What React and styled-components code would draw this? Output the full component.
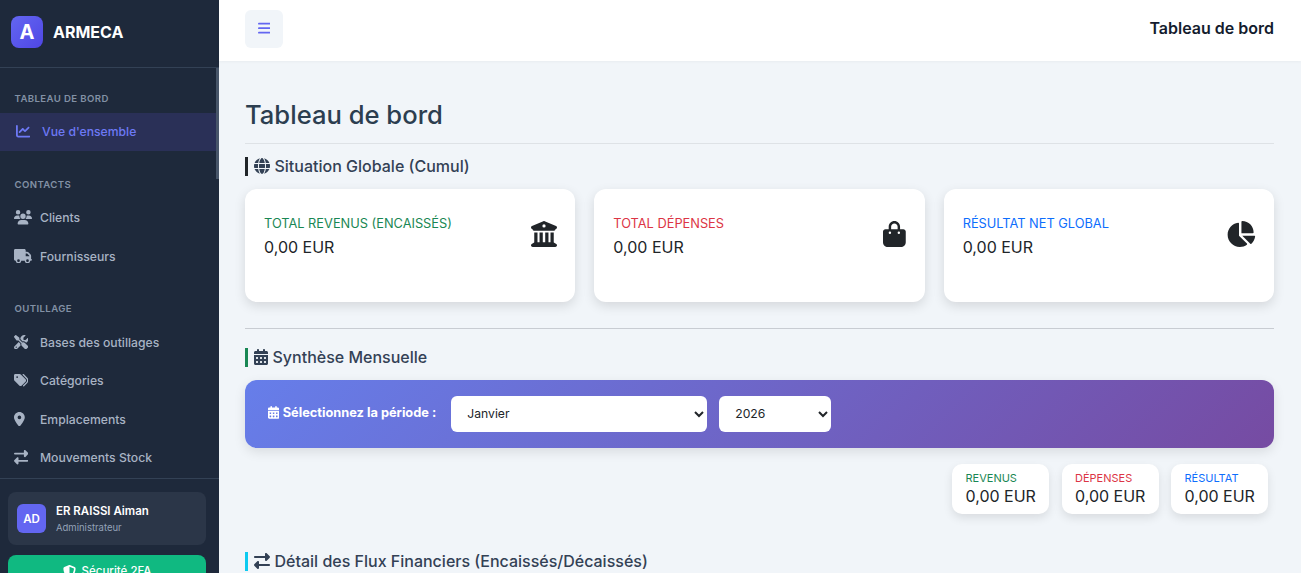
import styled, { createGlobalStyle } from "styled-components";
import {
  FaBagShopping,
  FaBars,
  FaBuildingColumns,
  FaCalendarDays,
  FaChartLine,
  FaChartPie,
  FaGlobe,
  FaLocationDot,
  FaRightLeft,
  FaScrewdriverWrench,
  FaShieldHalved,
  FaTags,
  FaTruck,
  FaUsers,
} from "react-icons/fa6";

const GlobalStyle = createGlobalStyle`
  * { box-sizing: border-box; }
  html, body { margin: 0; height: 100%; overflow: hidden; }
  body {
    font-family: Inter, "Liberation Sans", sans-serif;
    background: #f1f5f9;
    color: #212529;
  }
`;

const Layout = styled.div`
  display: flex;
  height: 573px;
  overflow: hidden;
`;

const Sidebar = styled.aside`
  width: 219px;
  flex-shrink: 0;
  height: 573px;
  display: flex;
  flex-direction: column;
  background: #1e293b;
`;

const Brand = styled.div`
  height: 68px;
  flex-shrink: 0;
  display: flex;
  align-items: center;
  gap: 10px;
  padding: 0 11px 4px;
  border-bottom: 1px solid #334155;
`;

const BrandLogo = styled.div`
  width: 32px;
  height: 32px;
  border-radius: 8px;
  display: flex;
  align-items: center;
  justify-content: center;
  background: linear-gradient(135deg, #6366f1, #4f46e5);
  color: #fff;
  font-size: 20px;
  font-weight: 700;
`;

const BrandName = styled.span`
  color: #fff;
  font-size: 16px;
  font-weight: 700;
`;

const Nav = styled.nav`
  position: relative;
  height: 411px;
  flex-shrink: 0;
  overflow: hidden;
  border-bottom: 1px solid #334155;
  padding-top: 24px;
`;

const NavThumb = styled.div`
  position: absolute;
  top: 0;
  right: 0;
  width: 3px;
  height: 111px;
  background: #475569;
`;

const NavGroup = styled.div`
  & + & {
    margin-top: 26.5px;
  }
`;

const NavTitle = styled.div`
  padding: 0 14.5px;
  margin-bottom: 8px;
  line-height: 13px;
  color: #94a3b8;
  opacity: 0.85;
  font-size: 9.6px;
  font-weight: 600;
  letter-spacing: 0.4px;
  text-transform: uppercase;
`;

const NavItem = styled.a`
  display: flex;
  align-items: center;
  height: ${(p) => (p.$active ? "38px" : "38.5px")};
  padding: 0 0 ${(p) => (p.$active ? "1.5px" : "0.5px")} ${(p) => (p.$active ? "16px" : "14px")};
  font-size: 12.2px;
  font-weight: 500;
  color: ${(p) => (p.$active ? "#6d79f5" : "#a8b3c4")};
  background: ${(p) => (p.$active ? "#2a3057" : "transparent")};
`;

// $box is the width of the icon's viewBox, the height of all of them being 512
const NavIcon = styled.span`
  width: 26px;
  flex-shrink: 0;
  display: flex;
  align-items: center;
  svg {
    height: 14.4px;
    width: ${(p) => (p.$box / 512) * 14.4}px;
  }
`;

const SidebarFooter = styled.div`
  padding: 13px 13px 0 8px;
  display: flex;
  flex-direction: column;
  gap: 10px;
`;

const UserCard = styled.div`
  height: 53px;
  display: flex;
  align-items: center;
  gap: 10px;
  padding: 0 9px;
  border-radius: 8px;
  background: #2b3648;
`;

const Avatar = styled.div`
  width: 29px;
  height: 29px;
  border-radius: 6px;
  display: flex;
  align-items: center;
  justify-content: center;
  background: #6366f1;
  color: #fff;
  font-size: 11.5px;
  font-weight: 600;
`;

const UserInfo = styled.div`
  padding-top: 2px;
`;

const UserName = styled.div`
  color: #fff;
  font-size: 11.5px;
  font-weight: 600;
  line-height: 15px;
`;

const UserRole = styled.div`
  color: #94a3b8;
  font-size: 9.5px;
  line-height: 17px;
`;

const TwoFactor = styled.button`
  height: 38px;
  border: 0;
  border-radius: 8px;
  background: #10b981;
  color: #fff;
  font-family: inherit;
  font-size: 11.5px;
  font-weight: 500;
  display: flex;
  justify-content: center;
  align-items: center;
  gap: 6px;
  padding: 0 0 6px;
  svg {
    width: 13px;
    height: 13px;
  }
`;

const Main = styled.main`
  flex: 1;
  min-width: 0;
  display: flex;
  flex-direction: column;
  background: #f1f5f9;
`;

const Header = styled.header`
  height: 61px;
  flex-shrink: 0;
  display: flex;
  align-items: center;
  justify-content: space-between;
  padding: 0 27px 4px 26px;
  background: #fff;
  box-shadow: 0 1px 3px rgba(0, 0, 0, 0.04);
`;

const MenuButton = styled.button`
  width: 38px;
  height: 38px;
  border: 0;
  border-radius: 6px;
  background: #f1f5f9;
  color: #6366f1;
  display: flex;
  align-items: center;
  justify-content: center;
  svg {
    height: 14.4px;
    width: 12.6px;
  }
`;

const HeaderTitle = styled.div`
  margin-bottom: 2px;
  color: #141c2e;
  font-size: 16px;
  font-weight: 600;
`;

const Content = styled.div`
  padding: 35px 27px 0 26px;
`;

const PageTitle = styled.h1`
  margin: 0;
  padding-bottom: 10px;
  border-bottom: 1px solid #dee2e6;
  color: #2c3e50;
  font-size: 25.6px;
  font-weight: 500;
  line-height: 37px;
`;

const SectionTitle = styled.h2`
  margin: ${(p) => p.$mt} 0 0;
  height: 19px;
  display: flex;
  align-items: center;
  gap: 4.5px;
  padding: 0 0 1px 6px;
  border-left: 3px solid ${(p) => p.$accent};
  color: #334155;
  font-size: 16px;
  font-weight: 500;
  white-space: nowrap;
  svg {
    height: 16px;
    width: ${(p) => p.$iconWidth || 16}px;
    flex-shrink: 0;
  }
`;

const StatGrid = styled.div`
  display: grid;
  grid-template-columns: repeat(3, 1fr);
  gap: 19px;
  margin-top: 13px;
`;

const StatCard = styled.div`
  height: 113px;
  display: flex;
  justify-content: space-between;
  padding: 26px 18.5px 0 19px;
  border-radius: 12px;
  background: #fff;
  box-shadow: 0 4px 12px rgba(0, 0, 0, 0.12);
`;

const StatLabel = styled.div`
  color: ${(p) => p.$color};
  font-size: 12.8px;
  line-height: 17px;
  text-transform: uppercase;
`;

const StatValue = styled.div`
  margin-top: 6px;
  color: #212529;
  font-size: 16px;
  line-height: 18px;
`;

const StatIcon = styled.div`
  padding-top: 6px;
  line-height: 0;
  color: #212529;
  svg {
    height: 26px;
    width: ${(p) => (p.$box / 512) * 26}px;
  }
`;

const Divider = styled.hr`
  margin: 26px 0 0;
  border: 0;
  border-top: 1px solid #c8ccd2;
`;

const PeriodBar = styled.div`
  height: 68px;
  margin-top: 13px;
  display: flex;
  align-items: center;
  padding: 0 23px;
  border-radius: 12px;
  background: linear-gradient(135deg, #667eea 0%, #764ba2 100%);
  box-shadow: 0 4px 12px rgba(0, 0, 0, 0.1);
`;

const PeriodLabel = styled.label`
  display: flex;
  align-items: center;
  gap: 3.5px;
  margin: 0 15px 3px 0;
  color: #fff;
  font-size: 12.8px;
  font-weight: 700;
  svg {
    height: 12.8px;
    width: 11.2px;
  }
`;

const PeriodSelect = styled.select`
  width: ${(p) => p.$width};
  height: 36px;
  margin-right: 12px;
  padding: 0 12px 2px;
  border: 0;
  border-radius: 6px;
  background: #fff;
  color: #212529;
  font-family: inherit;
  font-size: 12.2px;
`;

const Totals = styled.div`
  display: flex;
  justify-content: flex-end;
  gap: 12.5px;
  margin-top: 16px;
  padding-right: 6px;
`;

const TotalCard = styled.div`
  width: 97px;
  height: 50px;
  padding: 7px 0 0 13.5px;
  border-radius: 10px;
  background: #fff;
  box-shadow: 0 4px 10px rgba(0, 0, 0, 0.1);
`;

const TotalLabel = styled.div`
  color: ${(p) => p.$color};
  font-size: 11px;
  line-height: 14px;
  text-transform: uppercase;
`;

const TotalValue = styled.div`
  margin-top: 2px;
  color: #212529;
  font-size: 16px;
  line-height: 19px;
`;

const navGroups = [
  { title: "Tableau de bord", items: [{ label: "Vue d'ensemble", icon: FaChartLine, box: 512, active: true }] },
  {
    title: "Contacts",
    items: [
      { label: "Clients", icon: FaUsers, box: 640 },
      { label: "Fournisseurs", icon: FaTruck, box: 640 },
    ],
  },
  {
    title: "Outillage",
    items: [
      { label: "Bases des outillages", icon: FaScrewdriverWrench, box: 512 },
      { label: "Catégories", icon: FaTags, box: 512 },
      { label: "Emplacements", icon: FaLocationDot, box: 384 },
      { label: "Mouvements Stock", icon: FaRightLeft, box: 512 },
    ],
  },
];

const stats = [
  { label: "Total revenus (encaissés)", color: "#198754", icon: FaBuildingColumns, box: 512 },
  { label: "Total dépenses", color: "#dc3545", icon: FaBagShopping, box: 448 },
  { label: "Résultat net global", color: "#0d6efd", icon: FaChartPie, box: 576 },
];

const totals = [
  { label: "Revenus", color: "#198754" },
  { label: "Dépenses", color: "#dc3545" },
  { label: "Résultat", color: "#0d6efd" },
];

const App = () => {
  return (
    <Layout>
      <GlobalStyle />
      <Sidebar>
        <Brand>
          <BrandLogo>A</BrandLogo>
          <BrandName>ARMECA</BrandName>
        </Brand>
        <Nav>
          <NavThumb />
          {navGroups.map((group) => (
            <NavGroup key={group.title}>
              <NavTitle>{group.title}</NavTitle>
              {group.items.map(({ label, icon: Icon, box, active }) => (
                <NavItem key={label} $active={active}>
                  <NavIcon $box={box}>
                    <Icon />
                  </NavIcon>
                  {label}
                </NavItem>
              ))}
            </NavGroup>
          ))}
        </Nav>
        <SidebarFooter>
          <UserCard>
            <Avatar>AD</Avatar>
            <UserInfo>
              <UserName>ER RAISSI Aiman</UserName>
              <UserRole>Administrateur</UserRole>
            </UserInfo>
          </UserCard>
          <TwoFactor>
            <FaShieldHalved />
            Sécurité 2FA
          </TwoFactor>
        </SidebarFooter>
      </Sidebar>
      <Main>
        <Header>
          <MenuButton>
            <FaBars />
          </MenuButton>
          <HeaderTitle>Tableau de bord</HeaderTitle>
        </Header>
        <Content>
          <PageTitle>Tableau de bord</PageTitle>
          <SectionTitle $accent="#212529" $mt="13px">
            <FaGlobe />
            Situation Globale (Cumul)
          </SectionTitle>
          <StatGrid>
            {stats.map(({ label, color, icon: Icon, box }) => (
              <StatCard key={label}>
                <div>
                  <StatLabel $color={color}>{label}</StatLabel>
                  <StatValue>0,00 EUR</StatValue>
                </div>
                <StatIcon $box={box}>
                  <Icon />
                </StatIcon>
              </StatCard>
            ))}
          </StatGrid>
          <Divider />
          <SectionTitle $accent="#198754" $mt="19px" $iconWidth={14}>
            <FaCalendarDays />
            Synthèse Mensuelle
          </SectionTitle>
          <PeriodBar>
            <PeriodLabel>
              <FaCalendarDays />
              Sélectionnez la période :
            </PeriodLabel>
            <PeriodSelect $width="256px" defaultValue="Janvier">
              <option>Janvier</option>
            </PeriodSelect>
            <PeriodSelect $width="112px" defaultValue="2026">
              <option>2026</option>
            </PeriodSelect>
          </PeriodBar>
          <Totals>
            {totals.map(({ label, color }) => (
              <TotalCard key={label}>
                <TotalLabel $color={color}>{label}</TotalLabel>
                <TotalValue>0,00 EUR</TotalValue>
              </TotalCard>
            ))}
          </Totals>
          <SectionTitle $accent="#0dcaf0" $mt="38px">
            <FaRightLeft />
            Détail des Flux Financiers (Encaissés/Décaissés)
          </SectionTitle>
        </Content>
      </Main>
    </Layout>
  );
};

export default App;
